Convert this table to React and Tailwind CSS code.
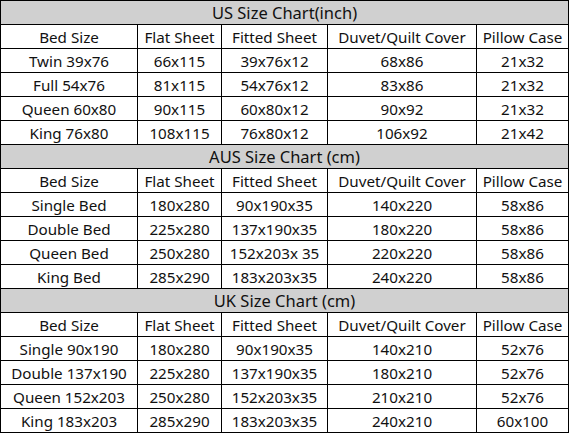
import React from "react";

const sections = [
  {
    title: "US Size Chart(inch)",
    rows: [
      ["Twin 39x76", "66x115", "39x76x12", "68x86", "21x32"],
      ["Full 54x76", "81x115", "54x76x12", "83x86", "21x32"],
      ["Queen 60x80", "90x115", "60x80x12", "90x92", "21x32"],
      ["King 76x80", "108x115", "76x80x12", "106x92", "21x42"],
    ],
  },
  {
    title: "AUS Size Chart (cm)",
    rows: [
      ["Single Bed", "180x280", "90x190x35", "140x220", "58x86"],
      ["Double Bed", "225x280", "137x190x35", "180x220", "58x86"],
      ["Queen Bed", "250x280", "152x203x 35", "220x220", "58x86"],
      ["King Bed", "285x290", "183x203x35", "240x220", "58x86"],
    ],
  },
  {
    title: "UK Size Chart (cm)",
    rows: [
      ["Single 90x190", "180x280", "90x190x35", "140x210", "52x76"],
      ["Double 137x190", "225x280", "137x190x35", "180x210", "52x76"],
      ["Queen 152x203", "250x280", "152x203x35", "210x210", "52x76"],
      ["King 183x203", "285x290", "183x203x35", "240x210", "60x100"],
    ],
  },
];

const header = ["Bed Size", "Flat Sheet", "Fitted Sheet", "Duvet/Quilt Cover", "Pillow Case"];

export default function App() {
  return (
    <div className="w-[569px] h-[434px] bg-white" style={{ fontFamily: '"Noto Sans", "Open Sans", sans-serif' }}>
      <table className="border-collapse table-fixed w-[568px] text-[#111]">
        <colgroup>
          <col className="w-[137px]" />
          <col className="w-[84px]" />
          <col className="w-[106px]" />
          <col className="w-[149px]" />
          <col className="w-[92px]" />
        </colgroup>
        <tbody>
          {sections.map((s) => (
            <React.Fragment key={s.title}>
              <tr className="h-[24px]">
                <td colSpan={5} className="border border-black bg-[#d0d0d0] text-center text-[16.5px] leading-[22px] p-0">
                  {s.title}
                </td>
              </tr>
              <tr className="h-[24px]">
                {header.map((h) => (
                  <td key={h} className="border border-black text-center text-[15.2px] leading-[22px] p-0 whitespace-nowrap">
                    {h}
                  </td>
                ))}
              </tr>
              {s.rows.map((r, i) => (
                <tr key={i} className="h-[24px]">
                  {r.map((c, j) => (
                    <td key={j} className="border border-black text-center text-[15.2px] leading-[22px] p-0 whitespace-nowrap">
                      {c}
                    </td>
                  ))}
                </tr>
              ))}
            </React.Fragment>
          ))}
        </tbody>
      </table>
    </div>
  );
}
